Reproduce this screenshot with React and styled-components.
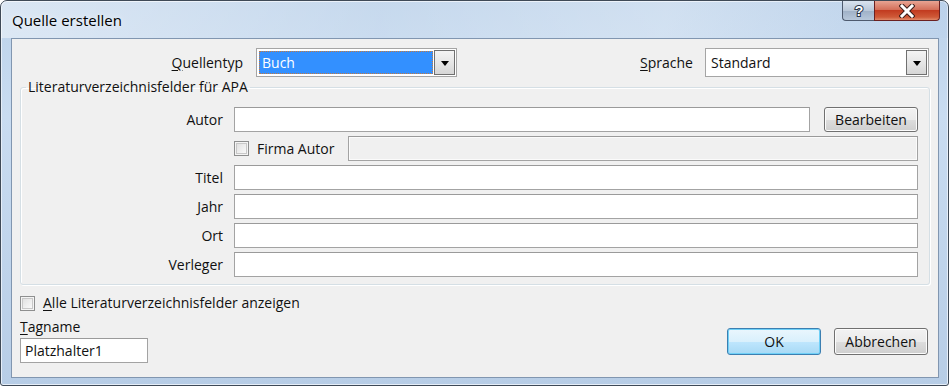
import styled, { createGlobalStyle } from "styled-components";

const Global = createGlobalStyle`
    html, body {
        margin: 0;
        background: #ffffff;
    }
    body {
        font-family: "Open Sans", "Noto Sans", sans-serif;
        font-size: 14px;
        color: #111111;
    }
`

const Window = styled.div`
    width: 947px;
    height: 384px;
    border: 1px solid #3f4a57;
    border-radius: 7px 7px 3px 3px;
    background: linear-gradient(180deg, #bcd2ea 0%, #c9dcf1 30%, #b7cde6 100%);
    box-shadow: inset 0 0 0 1px #e6eef8;
    display: flex;
    flex-direction: column;
    overflow: hidden;
`

const TitleBar = styled.div`
    height: 37px;
    display: flex;
    align-items: flex-start;
    justify-content: space-between;
    padding: 0 8px 0 11px;
    background: linear-gradient(100deg, rgba(255,255,255,0.45) 0%, rgba(255,255,255,0.15) 40%, rgba(255,255,255,0.3) 70%, rgba(180,205,235,0.2) 100%);
`

const Title = styled.div`
    font-size: 15px;
    line-height: 16px;
    margin-top: 11px;
    color: #000;
    text-shadow: 0 0 6px rgba(255,255,255,0.9);
`

const Controls = styled.div`
    display: flex;
`

const CaptionButton = styled.div`
    height: 20px;
    display: flex;
    align-items: center;
    justify-content: center;
    border: 1px solid #4e5a6e;
    border-top: none;
    box-sizing: border-box;
`

const HelpButton = styled(CaptionButton)`
    width: 32px;
    border-radius: 0 0 0 4px;
    border-right: none;
    background: linear-gradient(180deg, #d9e3ef 0%, #bac8d9 50%, #9fb1c7 52%, #b7c7da 100%);
`

const CloseButton = styled(CaptionButton)`
    width: 66px;
    border-radius: 0 0 4px 0;
    border-color: #6b2020;
    background: linear-gradient(180deg, #e8a493 0%, #d4705a 45%, #c23b20 50%, #cf5a38 85%, #e18a6a 100%);
`

const Body = styled.div`
    flex: 1;
    margin: 0 9px 7px 10px;
    background: #f0f0f0;
    border: 1px solid #8196b0;
    display: flex;
    flex-direction: column;
`

const TopRow = styled.div`
    display: flex;
    align-items: center;
    margin-top: 9px;
    height: 29px;
`

const Label = styled.label`
    text-align: right;
    white-space: nowrap;
    line-height: 18px;
    width: ${p => p.$width || "auto"};
    flex-shrink: 0;
`

const Key = styled.span`
    text-decoration: underline;
    text-underline-offset: 2px;
`

const Combo = styled.div`
    display: flex;
    width: ${p => p.$width};
    height: 29px;
    box-sizing: border-box;
    border: 1px solid #a5a5a5;
    background: #fff;
    padding: 1px;
    margin-left: ${p => p.$gap};
`

const ComboText = styled.div`
    flex: 1;
    display: flex;
    align-items: center;
    padding-left: 3px;
    background: ${p => (p.$selected ? "#3390ff" : "#fff")};
    color: ${p => (p.$selected ? "#fff" : "#111")};
    outline: ${p => (p.$selected ? "1px dotted #c87a3c" : "none")};
    outline-offset: -1px;
    margin: 1px;
`

const ComboArrow = styled.div`
    width: 21px;
    box-sizing: border-box;
    border: 1px solid #707070;
    background: linear-gradient(180deg, #f4f4f4 0%, #e6e6e6 50%, #d6d6d6 100%);
    display: flex;
    align-items: center;
    justify-content: center;
    &::after {
        content: "";
        border-left: 4px solid transparent;
        border-right: 4px solid transparent;
        border-top: 5px solid #000;
        margin-top: 1px;
    }
`

const Spacer = styled.div`
    flex: ${p => p.$fixed ? `0 0 ${p.$fixed}` : 1};
`

const GroupBox = styled.fieldset`
    margin: 1px 8px 0 8px;
    padding: 11px 11px 7px 0;
    border: 1px solid #d5dfe5;
    border-radius: 3px;
    box-shadow: inset 1px 1px 0 #fff, 1px 1px 0 #fff;
    min-width: 0;
`

const Legend = styled.legend`
    padding: 0 2px;
    margin-left: 5px;
    line-height: 18px;
`

const FieldGrid = styled.div`
    display: grid;
    grid-template-columns: 202px 1fr;
    column-gap: 11px;
    row-gap: 4px;
    grid-auto-rows: 25px;
    align-items: center;
`

const TextBox = styled.div`
    height: 25px;
    box-sizing: border-box;
    border: 1px solid #a3a3a3;
    border-top-color: #9a9a9a;
    background: ${p => (p.$disabled ? "#f0f0f0" : "#fff")};
    box-shadow: inset 0 0 0 1px ${p => (p.$disabled ? "#fbfbfb" : "#fff")};
    display: flex;
    align-items: center;
    padding-left: 4px;
    flex: ${p => (p.$grow ? 1 : "none")};
    width: ${p => p.$width || "auto"};
`

const InlineRow = styled.div`
    display: flex;
    align-items: center;
    gap: 14px;
    height: 25px;
`

const Button = styled.div`
    width: ${p => p.$width || "94px"};
    height: ${p => p.$height || "27px"};
    box-sizing: border-box;
    border: 1px solid ${p => (p.$default ? "#3c7fb1" : "#707070")};
    border-radius: 3px;
    background: ${p =>
        p.$default
            ? "linear-gradient(180deg, #eaf6fd 0%, #d9f0fc 50%, #bee6fd 52%, #a7d9f5 100%)"
            : "linear-gradient(180deg, #f2f2f2 0%, #ebebeb 50%, #dddddd 52%, #cfcfcf 100%)"};
    box-shadow: inset 0 0 0 1px ${p => (p.$default ? "#6fd0f7" : "#fcfcfc")};
    display: flex;
    align-items: center;
    justify-content: center;
    flex-shrink: 0;
`

const CheckRow = styled.label`
    display: flex;
    align-items: center;
    gap: 8px;
    line-height: 18px;
    white-space: nowrap;
`

const CheckBox = styled.span`
    width: 15px;
    height: 15px;
    box-sizing: border-box;
    border: 1px solid #8e8f8f;
    background: linear-gradient(135deg, #dcdcdc 0%, #f4f4f4 70%, #ffffff 100%);
    box-shadow: inset 0 0 0 1px #f4f4f4, inset 0 0 0 2px #c8c8c8;
    flex-shrink: 0;
`

const Footer = styled.div`
    display: flex;
    justify-content: space-between;
    align-items: flex-end;
    margin: 5px 10px 14px 8px;
    flex: 1;
`

const FooterLeft = styled.div`
    display: flex;
    flex-direction: column;
`

const TagLabel = styled.div`
    line-height: 18px;
    margin-top: 6px;
    margin-bottom: 2px;
`

const Buttons = styled.div`
    display: flex;
    gap: 13px;
    margin-bottom: 8px;
`

const HelpIcon = () => (
    <svg width="12" height="15" viewBox="0 0 12 15">
        <text x="6" y="12.5" textAnchor="middle" fontFamily="Liberation Sans, sans-serif" fontWeight="bold" fontSize="14"
            fill="#ffffff" stroke="#26344a" strokeWidth="2" paintOrder="stroke">?</text>
    </svg>
)

const CloseIcon = () => (
    <svg width="16" height="14" viewBox="0 0 16 14">
        <path d="M3 2 L13 12 M13 2 L3 12" stroke="#3b1d18" strokeWidth="5" strokeLinecap="square" />
        <path d="M3 2 L13 12 M13 2 L3 12" stroke="#ffffff" strokeWidth="3" strokeLinecap="square" />
    </svg>
)

const fields = ["Titel", "Jahr", "Ort", "Verleger"]

const App = () => {
    return (
        <>
            <Global />
            <Window>
                <TitleBar>
                    <Title>Quelle erstellen</Title>
                    <Controls>
                        <HelpButton><HelpIcon /></HelpButton>
                        <CloseButton><CloseIcon /></CloseButton>
                    </Controls>
                </TitleBar>
                <Body>
                    <TopRow>
                        <Label $width="231px"><Key>Q</Key>uellentyp</Label>
                        <Combo $width="201px" $gap="13px">
                            <ComboText $selected>Buch</ComboText>
                            <ComboArrow />
                        </Combo>
                        <Spacer />
                        <Label><Key>S</Key>prache</Label>
                        <Combo $width="224px" $gap="12px">
                            <ComboText>Standard</ComboText>
                            <ComboArrow />
                        </Combo>
                        <Spacer $fixed="9px" />
                    </TopRow>
                    <GroupBox>
                        <Legend>Literaturverzeichnisfelder für APA</Legend>
                        <FieldGrid>
                            <Label>Autor</Label>
                            <InlineRow>
                                <TextBox $grow />
                                <Button $width="94px" $height="25px">Bearbeiten</Button>
                            </InlineRow>
                            <span />
                            <InlineRow>
                                <CheckRow><CheckBox />Firma Autor</CheckRow>
                                <TextBox $grow $disabled />
                            </InlineRow>
                            {fields.map(f => [
                                <Label key={f + "-label"}>{f}</Label>,
                                <TextBox key={f} />
                            ])}
                        </FieldGrid>
                    </GroupBox>
                    <Footer>
                        <FooterLeft>
                            <CheckRow><CheckBox /><span><Key>A</Key>lle Literaturverzeichnisfelder anzeigen</span></CheckRow>
                            <TagLabel><Key>T</Key>agname</TagLabel>
                            <TextBox $width="128px">Platzhalter1</TextBox>
                        </FooterLeft>
                        <Buttons>
                            <Button $default>OK</Button>
                            <Button>Abbrechen</Button>
                        </Buttons>
                    </Footer>
                </Body>
            </Window>
        </>
    )
}

export default App
